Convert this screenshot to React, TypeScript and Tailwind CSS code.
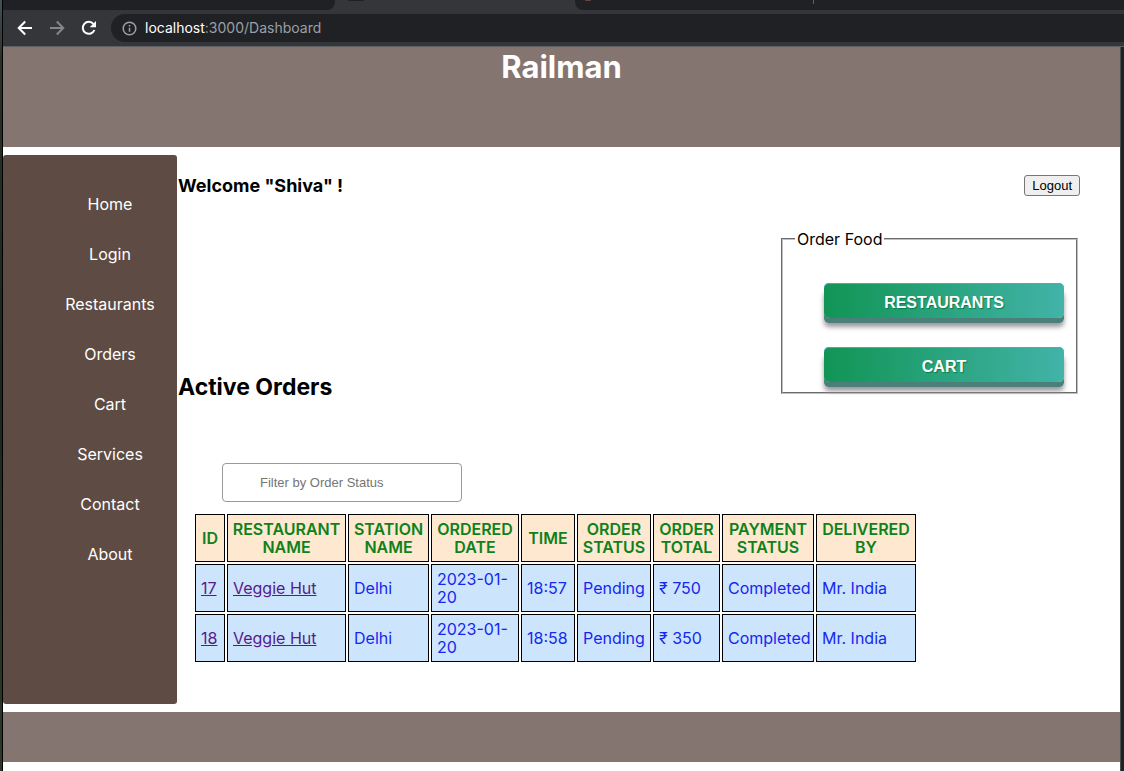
const links = ['Home', 'Login', 'Restaurants', 'Orders', 'Cart', 'Services', 'Contact', 'About'];

const columns = [
  { label: 'ID', width: 'w-[30px]' },
  { label: 'RESTAURANT NAME', width: 'w-[119px]' },
  { label: 'STATION NAME', width: 'w-[81px]' },
  { label: 'ORDERED DATE', width: 'w-[88px]' },
  { label: 'TIME', width: 'w-[54px]' },
  { label: 'ORDER STATUS', width: 'w-[74px]' },
  { label: 'ORDER TOTAL', width: 'w-[67px]' },
  { label: 'PAYMENT STATUS', width: 'w-[92px]' },
  { label: 'DELIVERED BY', width: 'w-[100px]' },
];

const orders = [
  { id: 17, restaurant: 'Veggie Hut', station: 'Delhi', date: '2023-01-20', time: '18:57', status: 'Pending', total: 750, payment: 'Completed', by: 'Mr. India' },
  { id: 18, restaurant: 'Veggie Hut', station: 'Delhi', date: '2023-01-20', time: '18:58', status: 'Pending', total: 350, payment: 'Completed', by: 'Mr. India' },
];

function BrowserBar() {
  return (
    <header className="border-b border-[#5f6063] bg-[#35363a]">
      <div className="flex h-[10px]">
        <div className="w-[332px] rounded-br-lg bg-[#202124]" />
        <div className="w-[240px] pl-[13px]">
          <div className="h-px w-4 rounded-b-full bg-[#202124]" />
        </div>
        <div className="flex flex-1 rounded-bl-lg bg-[#202124] pl-[10px]">
          <div className="h-px w-[6px] rounded-b-full bg-[#6b4444]" />
          <div className="ml-[222px] h-1 w-px bg-[#5f6368]" />
        </div>
      </div>
      <div className="flex h-9 items-center py-1 pl-[14px]">
        <button aria-label="Back" className="mr-4 text-white">
          <svg width="16" height="16" viewBox="0 0 16 16" fill="none" stroke="currentColor" strokeWidth="2">
            <path d="M15 8H2M8.200 1.500L1.700 8l6.500 6.500" />
          </svg>
        </button>
        <button aria-label="Forward" className="mr-4 text-[#85868a]">
          <svg width="16" height="16" viewBox="0 0 16 16" fill="none" stroke="currentColor" strokeWidth="2">
            <path d="M1 8h13M7.800 1.500L14.300 8l-6.500 6.500" />
          </svg>
        </button>
        <button aria-label="Reload" className="mr-[14px] text-white">
          <svg width="16" height="16" viewBox="0 0 16 16">
            <path d="M13.400 10A6 6 0 1 1 12.500 4.100" fill="none" stroke="currentColor" strokeWidth="2" />
            <path d="M15 1v6.300H8.700z" fill="currentColor" />
          </svg>
        </button>
        <div className="flex h-7 flex-1 items-center gap-2 rounded-l-full bg-[#202124] pl-[11px]">
          <svg width="15" height="15" viewBox="0 0 15 15" fill="none" stroke="#9aa0a6" strokeWidth="1.500">
            <circle cx="7.500" cy="7.500" r="6.300" />
            <path d="M7.500 6.700v4M7.500 3.900v1.500" />
          </svg>
          <p className="text-sm text-[#9aa0a6]">
            <span className="text-white">localhost</span>:3000/Dashboard
          </p>
        </div>
      </div>
    </header>
  );
}

function Sidebar() {
  return (
    <nav className="w-[174px] shrink-0 rounded-[3px] bg-[#5e4b43] pt-6 pb-[125px] pl-10 text-center text-white">
      <ul>
        {links.map((link) => (
          <li key={link} className="h-[50px] leading-[50px]">
            <a href={'#' + link}>{link}</a>
          </li>
        ))}
      </ul>
    </nav>
  );
}

function ActionButton({ label }: { label: string }) {
  return (
    <button className="block h-[35px] w-60 rounded-[5px] bg-linear-[to_right,#119555,#42b3a8] pt-1 font-['Liberation_Sans',Arial,sans-serif] text-base font-bold text-white shadow-[inset_0_1px_0_#3cb0c8,0_5px_0_#4b7f79,0_9px_5px_#999] text-shadow-[1px_1px_1px_#0a7a4a]">
      {label}
    </button>
  );
}

function OrdersTable() {
  return (
    <table className="mt-[10px] ml-[15px] w-[725px] table-fixed border-separate border-spacing-[2px] text-[#1428ef]">
      <thead>
        <tr className="h-12">
          {columns.map((c) => (
            <th key={c.label} className={c.width + ' border border-black bg-[#ffe8d0] font-semibold text-[#0d821c]'}>
              {c.label}
            </th>
          ))}
        </tr>
      </thead>
      <tbody className="[&_a]:text-[#551a8b] [&_a]:underline [&_td]:border [&_td]:border-black [&_td]:bg-[#cde4fd] [&_td]:px-[5px]">
        {orders.map((o) => (
          <tr key={o.id} className="h-12">
            <td><a href={'#order-' + o.id}>{o.id}</a></td>
            <td><a href={'#restaurant-' + o.id}>{o.restaurant}</a></td>
            <td>{o.station}</td>
            <td>{o.date}</td>
            <td>{o.time}</td>
            <td>{o.status}</td>
            <td>₹ {o.total}</td>
            <td>{o.payment}</td>
            <td>{o.by}</td>
          </tr>
        ))}
      </tbody>
    </table>
  );
}

export default function App() {
  return (
    <div className="flex min-h-screen font-[Inter,'Noto_Sans',sans-serif] text-base leading-[18px] text-black">
      <div className="w-[3px] shrink-0 border-r border-black bg-linear-[to_bottom,#44505a,#2b3025_8%,#20251c_50%,#2f3826]" />
      <div className="flex min-w-0 flex-1 flex-col">
        <BrowserBar />
        <div className="flex flex-1">
          <div className="flex min-w-0 flex-1 flex-col gap-2 bg-white">
            <div className="h-[100px] bg-[#857571] pt-[2px] text-center text-white">
              <h1 className="text-[31px] leading-9 font-bold">Railman</h1>
            </div>
            <div className="flex">
              <Sidebar />
              <main className="min-w-0 flex-1 pl-px">
                <div className="flex items-center justify-between pt-5 pr-10">
                  <h3 className="text-lg leading-5 font-bold">Welcome "Shiva" !</h3>
                  <button className="h-[21px] rounded-[3px] border border-[#767676] bg-[#efefef] px-[7px] font-['Liberation_Sans',Arial,sans-serif] text-[13px]">
                    Logout
                  </button>
                </div>
                <div className="mt-[34px] flex items-end justify-between pr-[42px]">
                  <h2 className="text-[23px] leading-7 font-bold">Active Orders</h2>
                  <fieldset className="mb-[7px] w-[297px] border-2 border-[#c0c0c0] pb-[10px] pl-[41px] [border-style:groove]">
                    <legend className="-ml-[29px] px-[2px]">Order Food</legend>
                    <div className="flex flex-col gap-[29px] pt-[35px]">
                      <ActionButton label="RESTAURANTS" />
                      <ActionButton label="CART" />
                    </div>
                  </fieldset>
                </div>
                <input
                  aria-label="Filter by Order Status"
                  placeholder="Filter by Order Status"
                  className="mt-[62px] ml-[44px] block h-[39px] w-60 rounded border border-[#999] px-[37px] font-['Liberation_Sans',Arial,sans-serif] text-[13px] placeholder:text-[#757575]"
                />
                <OrdersTable />
              </main>
            </div>
            <footer className="h-[50px] bg-[#857571]" />
          </div>
          <div className="w-1 shrink-0 border-l border-[#4a4e52] bg-[#202124]" />
        </div>
      </div>
    </div>
  );
}
